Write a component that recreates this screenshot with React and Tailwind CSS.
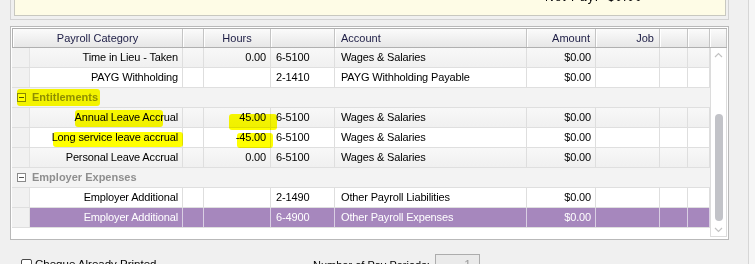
import React from "react";

const COLS = [
  { key: "cat", w: "w-[153px]", align: "text-right pr-[4px]" },
  { key: "x1", w: "w-[21px]", align: "" },
  { key: "hours", w: "w-[67px]", align: "text-right pr-[4px]" },
  { key: "code", w: "w-[64px]", align: "text-left pl-[5px]" },
  { key: "acct", w: "w-[192px]", align: "text-left pl-[6px]" },
  { key: "amt", w: "w-[69px]", align: "text-right pr-[4px]" },
  { key: "job", w: "w-[64px]", align: "" },
  { key: "x2", w: "w-[28px]", align: "" },
  { key: "x3", w: "w-[22px]", align: "" },
];

const ROWS = [
  { cat: "Time in Lieu - Taken", hours: "0.00", code: "6-5100", acct: "Wages & Salaries", amt: "$0.00", shade: "gray" },
  { cat: "PAYG Withholding", hours: "", code: "2-1410", acct: "PAYG Withholding Payable", amt: "$0.00", shade: "white" },
  { group: "Entitlements" },
  { cat: "Annual Leave Accrual", hours: "45.00", code: "6-5100", acct: "Wages & Salaries", amt: "$0.00", shade: "gray" },
  { cat: "Long service leave accrual", hours: "-45.00", code: "6-5100", acct: "Wages & Salaries", amt: "$0.00", shade: "white" },
  { cat: "Personal Leave Accrual", hours: "0.00", code: "6-5100", acct: "Wages & Salaries", amt: "$0.00", shade: "gray" },
  { group: "Employer Expenses" },
  { cat: "Employer Additional", hours: "", code: "2-1490", acct: "Other Payroll Liabilities", amt: "$0.00", shade: "white" },
  { cat: "Employer Additional", hours: "", code: "6-4900", acct: "Other Payroll Expenses", amt: "$0.00", shade: "purple" },
];

function HeaderCell({ w, align, children }) {
  return (
    <div
      className={`${w} h-full border-r border-[#c4c4c4] bg-gradient-to-b from-[#fbfbfb] to-[#e7e7e7] shadow-[inset_1px_0_0_#ffffff] ${align} text-[#1c1c44] leading-[18px] truncate`}
    >
      {children}
    </div>
  );
}

function GroupRow({ label }) {
  return (
    <div className="flex shrink-0 items-center h-[20px] border-b border-[#dfdfdf] bg-[#f3f3f3]">
      <div className="ml-[5px] w-[9px] h-[9px] border border-[#8a8a8a] bg-white flex items-center justify-center">
        <div className="w-[5px] h-[1px] bg-[#555]" />
      </div>
      <span className="ml-[6px] font-bold text-[#8e8e8e]">{label}</span>
    </div>
  );
}

function DataRow({ row }) {
  const bg =
    row.shade === "purple"
      ? "bg-[#a687bd] text-white"
      : row.shade === "gray"
      ? "bg-gradient-to-b from-[#f8f8f8] to-[#f0f0f0] text-black"
      : "bg-white text-black";
  const line = row.shade === "purple" ? "border-[#d9cfe3]" : "border-[#dedede]";
  return (
    <div className="flex shrink-0 h-[20px] border-b border-[#dfdfdf]">
      <div className="w-[18px] h-full bg-[#f1f1f1] border-r border-[#e3e3e3]" />
      <div className={`flex h-full ${bg}`}>
        {COLS.map((c) => (
          <div
            key={c.key}
            className={`${c.w} h-full border-r ${line} ${c.align} leading-[19px] tracking-[-0.15px] whitespace-nowrap overflow-hidden`}
          >
            {row[c.key] || ""}
          </div>
        ))}
      </div>
    </div>
  );
}

function Chevron({ up }) {
  return (
    <svg width="9" height="6" viewBox="0 0 9 6">
      <path
        d={up ? "M1 5 L4.5 1.5 L8 5" : "M1 1 L4.5 4.5 L8 1"}
        fill="none"
        stroke="#c3c3c3"
        strokeWidth="1.2"
      />
    </svg>
  );
}

export default function App() {
  return (
    <div
      className="relative w-[755px] h-[264px] overflow-hidden bg-[#f0f0f0] flex text-[11px]"
      style={{ fontFamily: '"Liberation Sans", Arial, sans-serif' }}
    >
      <div className="w-[748px] h-full flex flex-col">
        {/* net pay strip */}
        <div className="shrink-0 ml-[10px] w-[719px] h-[20px] border-x border-b border-[#d2d2d2] pl-[3px] pr-[2px]">
          <div className="h-[16px] border-x border-b border-[#c8c8c0] bg-[#fefce6] overflow-hidden">
            <div className="pl-[530px] -mt-[10px] text-[12px] leading-[14px] text-black tracking-[1px]">
              Net Pay:&nbsp;&nbsp;$0.00
            </div>
          </div>
        </div>

        {/* grid */}
        <div className="shrink-0 mt-[6px] ml-[10px] w-[719px] h-[214px] border border-[#b9b9b9] bg-white p-[1px]">
          <div className="flex h-[20px] border border-[#b0b0b0] border-r-0">
            <HeaderCell w="w-[170px]" align="text-center">Payroll Category</HeaderCell>
            <HeaderCell w="w-[21px]" align="" />
            <HeaderCell w="w-[67px]" align="text-center">Hours</HeaderCell>
            <HeaderCell w="w-[64px]" align="" />
            <HeaderCell w="w-[192px]" align="text-left pl-[6px]">Account</HeaderCell>
            <HeaderCell w="w-[69px]" align="text-right pr-[5px]">Amount</HeaderCell>
            <HeaderCell w="w-[64px]" align="text-right pr-[5px]">Job</HeaderCell>
            <HeaderCell w="w-[28px]" align="" />
            <HeaderCell w="w-[22px]" align="" />
            <HeaderCell w="w-[17px]" align="" />
          </div>
          <div className="flex h-[189px]">
            <div className="w-[698px] flex flex-col">
              {ROWS.map((r, i) =>
                r.group ? <GroupRow key={i} label={r.group} /> : <DataRow key={i} row={r} />
              )}
            </div>
            <div className="w-[17px] h-full border-l border-r border-b border-[#dcdcdc] flex flex-col items-center">
              <div className="mt-[4px]">
                <Chevron up />
              </div>
              <div className="mt-[56px] w-[8px] h-[107px] rounded-full bg-[#c2c3c8]" />
              <div className="mt-[6px]">
                <Chevron />
              </div>
            </div>
          </div>
        </div>

        {/* bottom controls */}
        <div className="shrink-0 flex items-start">
          <div className="ml-[21px] w-[292px] shrink-0 flex items-start">
            <div className="mt-[19px] w-[11px] h-[11px] border border-[#4a4a4a] rounded-[2px] bg-white" />
            <span className="mt-[17px] ml-[3px] text-[11.5px] leading-[14px] text-black whitespace-nowrap">
              Cheque Already Printed
            </span>
          </div>
          <div className="w-[122px] shrink-0 mt-[18px] text-[11px] leading-[14px] text-black whitespace-nowrap">
            Number of Pay Periods:
          </div>
          <div className="shrink-0 mt-[14px] w-[45px] h-[22px] border border-[#acacac] bg-[#eaeaea] text-right pr-[8px] text-[12px] text-[#9a9a9a] leading-[20px]">
            1
          </div>
        </div>
      </div>
      <div className="w-[1px] h-full bg-[#d6d6d6]" />
      <div className="flex-1 h-full bg-[#f6f6f6]" />

      {/* highlighter marks */}
      <div className="absolute left-[17px] top-[89px] w-[83px] h-[17px] rounded-[3px] bg-[#ffff00] mix-blend-multiply" />
      <div className="absolute left-[75px] top-[110px] w-[88px] h-[17px] rounded-[3px] bg-[#ffff00] mix-blend-multiply" />
      <div className="absolute left-[229px] top-[114px] w-[48px] h-[16px] rounded-[3px] bg-[#ffff00] mix-blend-multiply" />
      <div className="absolute left-[53px] top-[132px] w-[130px] h-[15px] rounded-[3px] bg-[#ffff00] mix-blend-multiply" />
      <div className="absolute left-[237px] top-[133px] w-[36px] h-[15px] rounded-[3px] bg-[#ffff00] mix-blend-multiply" />
    </div>
  );
}
